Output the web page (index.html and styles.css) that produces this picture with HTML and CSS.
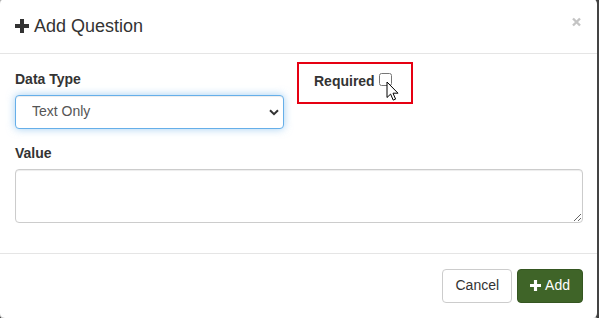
FILE: index.html
```html
<!DOCTYPE html>
<html lang="en">
<head>
  <meta charset="UTF-8">
  <title>Add Question</title>
  <link rel="stylesheet" href="styles.css">
</head>
<body>

  <div class="modal">
    <!-- Header -->
    <div class="modal-header">
      <h4 class="modal-title">
        <svg class="icon-plus" width="14" height="14" viewBox="0 0 14 14"><path d="M5 0h4v5h5v4H9v5H5V9H0V5h5z"/></svg>
        Add Question
      </h4>
      <button class="close" aria-label="Close">
        <svg width="9" height="10" viewBox="0 0 9 10"><path d="M1 1.5l7 7M8 1.5l-7 7"/></svg>
      </button>
    </div>

    <!-- Body -->
    <div class="modal-body">
      <div class="form-row">
        <div class="form-group">
          <label class="field-label">Data Type</label>
          <div class="select-wrap">
            <select class="form-control focused">
              <option>Text Only</option>
            </select>
            <svg class="chevron" width="10" height="7" viewBox="0 0 10 7"><path d="M1 1.2l4 4 4-4"/></svg>
          </div>
        </div>
        <div class="form-group required-col">
          <label class="check-label">Required <input type="checkbox"></label>
          <span class="highlight"></span>
          <svg class="cursor" width="14" height="20" viewBox="0 0 14 20"><path d="M1 1v15.5l3.6-3.4 2.6 6 2.4-1-2.6-5.9h5z"/></svg>
        </div>
      </div>

      <div class="form-group">
        <label class="field-label">Value</label>
        <textarea class="form-control" rows="2"></textarea>
      </div>
    </div>

    <!-- Footer -->
    <div class="modal-footer">
      <button class="btn btn-default">Cancel</button>
      <button class="btn btn-success">
        <svg class="icon-plus" width="11" height="11" viewBox="0 0 14 14"><path d="M5 0h4v5h5v4H9v5H5V9H0V5h5z"/></svg>
        Add
      </button>
    </div>
  </div>

</body>
</html>
```

FILE: styles.css
```css
html, body {
  margin: 0;
  padding: 0;
  overflow: hidden;
  font-family: 'Liberation Sans', Arial, sans-serif;
  font-size: 14px;
  line-height: 1.42857;
  color: #333;
  background: #3c3c3c;
}

.modal {
  box-sizing: border-box;
  width: 600px;
  margin: -2px 0 0 -1px;
  background: #fff;
  border: 1px solid rgba(0, 0, 0, 0.2);
  border-right: 2px solid #444;
  border-radius: 6px;
}

.modal-header {
  display: flex;
  justify-content: space-between;
  align-items: flex-start;
  padding: 14px 14px 14px 15px;
  border-bottom: 1px solid #e5e5e5;
}

.modal-title {
  display: flex;
  align-items: center;
  gap: 5px;
  margin: 0;
  font-size: 18px;
  font-weight: normal;
  line-height: 26px;
}

.modal-title .icon-plus {
  fill: #333;
  margin-top: -1px;
}

.close {
  margin: 4px 2px 0 0;
  padding: 0;
  border: 0;
  background: transparent;
  line-height: 0;
}

.close path {
  stroke: #c4c4c4;
  stroke-width: 2.4;
  fill: none;
}

.modal-body {
  padding: 16px 14px 15px 15px;
}

.form-row {
  display: grid;
  grid-template-columns: 1fr 1fr;
  column-gap: 30px;
}

.form-group {
  margin-bottom: 15px;
}

.field-label {
  display: block;
  margin-bottom: 5px;
  font-weight: bold;
}

.form-control {
  box-sizing: border-box;
  display: block;
  width: 100%;
  padding: 6px 12px;
  font-family: inherit;
  font-size: 14px;
  line-height: 1.42857;
  color: #555;
  background: #fff;
  border: 1px solid #ccc;
  border-radius: 4px;
  box-shadow: inset 0 1px 1px rgba(0, 0, 0, 0.075);
}

textarea.form-control {
  height: 54px;
  resize: vertical;
}

.select-wrap {
  position: relative;
}

select.form-control {
  height: 34px;
  padding-left: 16px;
  appearance: none;
  -webkit-appearance: none;
}

.focused {
  border-color: #66afe9;
  outline: 0;
  box-shadow: inset 0 1px 1px rgba(0, 0, 0, 0.075), 0 0 8px rgba(102, 175, 233, 0.6);
}

.chevron {
  position: absolute;
  right: 5px;
  top: 14px;
  pointer-events: none;
}

.chevron path {
  stroke: #333;
  stroke-width: 2;
  fill: none;
}

.required-col {
  position: relative;
}

.check-label {
  display: inline-block;
  padding-top: 2px;
  font-weight: bold;
}

.check-label input {
  width: 13px;
  height: 13px;
  margin: 0 0 -1px 0;
  vertical-align: baseline;
}

.highlight {
  position: absolute;
  left: -17px;
  top: -8px;
  width: 116px;
  height: 42px;
  box-sizing: border-box;
  border: 2px solid #e60012;
  pointer-events: none;
}

.cursor {
  position: absolute;
  left: 72px;
  top: 11px;
}

.cursor path {
  fill: #fff;
  stroke: #000;
  stroke-width: 1;
  stroke-linejoin: round;
}

.modal-footer {
  display: flex;
  justify-content: flex-end;
  gap: 5px;
  padding: 15px 14px 15px 15px;
  border-top: 1px solid #e5e5e5;
}

.btn {
  display: inline-flex;
  align-items: center;
  gap: 4px;
  height: 34px;
  padding: 6px 12px;
  font-family: inherit;
  font-size: 14px;
  line-height: 1.42857;
  border: 1px solid transparent;
  border-radius: 4px;
}

.btn-default {
  color: #333;
  background: #fff;
  border-color: #ccc;
}

.btn-success {
  color: #fff;
  background: #3f6428;
  border-color: #355621;
}

.btn-success .icon-plus {
  fill: #fff;
}
```
